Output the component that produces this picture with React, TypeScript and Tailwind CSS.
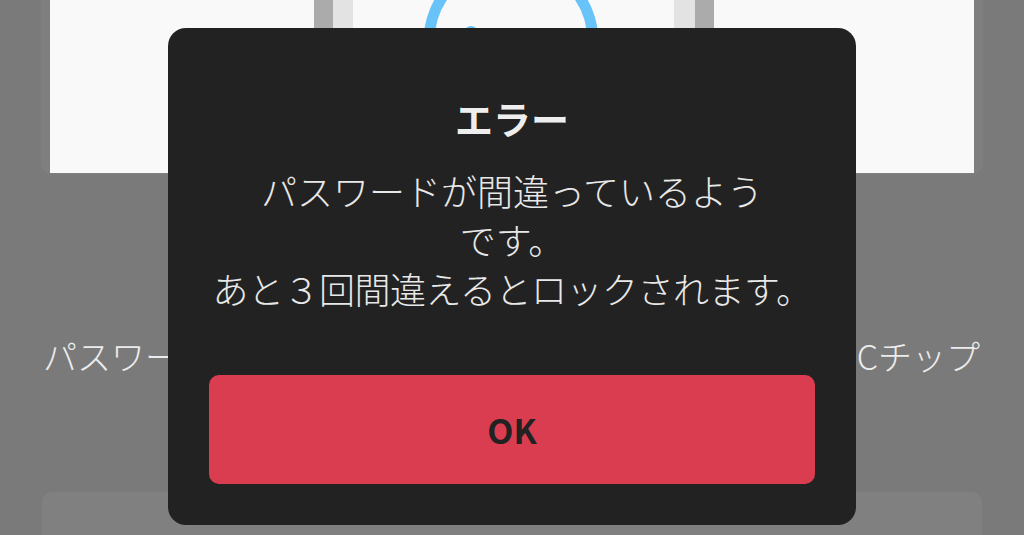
const jp = "font-['Noto_Sans_CJK_JP','Noto_Sans',sans-serif]";

function PhoneIllustration() {
  return (
    <svg width="924" height="173" viewBox="0 0 924 173" className="block">
      <rect x="264" y="0" width="19" height="173" fill="#ababab" />
      <rect x="283" y="0" width="20" height="173" fill="#e3e3e3" />
      <rect x="624" y="0" width="21" height="173" fill="#e3e3e3" />
      <rect x="645" y="0" width="19" height="173" fill="#ababab" />
      <circle cx="461" cy="42" r="82" fill="none" stroke="#68c3f9" strokeWidth="11" />
      <circle cx="421" cy="33" r="7" fill="#68c3f9" />
    </svg>
  );
}

function ErrorDialog() {
  return (
    <div className="absolute left-[168px] top-[28px] flex h-[497px] w-[688px] flex-col items-center rounded-[18px] bg-[#222222] px-[41px] pt-[65px] pb-[41px]">
      <h2 className={`${jp} text-[38px] font-bold leading-[50px] text-[#eeeeee]`}>エラー</h2>
      <div className={`${jp} mt-[23px] whitespace-nowrap text-center text-[36px] font-light leading-[49px] text-[#e8e8e8]`}>
        <p>パスワードが間違っているよう</p>
        <p>です。</p>
        <p className="tracking-[-0.5px]">あと３回間違えるとロックされます。</p>
      </div>
      <button
        type="button"
        className={`${jp} mt-auto flex h-[109px] w-full items-center justify-center rounded-[10px] bg-[#db3d50] text-[34px] font-bold text-[#222222]`}
      >
        OK
      </button>
    </div>
  );
}

export default function App() {
  return (
    <div className="relative h-[535px] w-[1024px] overflow-hidden bg-[#7a7a7a]">
      <div className="mx-[41px] h-[174px] rounded-b-[10px] bg-[#7f7f7f] px-[9px]">
        <div className="h-[173px] bg-[#f9f9f9]">
          <PhoneIllustration />
        </div>
      </div>

      <div className={`${jp} mt-[162px] flex justify-between pl-[43px] pr-[44px] text-[34px] font-light leading-[40px] text-[#ececec]`}>
        <span>パスワード</span>
        <span>ICチップ</span>
      </div>

      <div className="mx-[42px] mt-[116px] h-[60px] rounded-t-[10px] bg-[#808080]" />

      <ErrorDialog />
    </div>
  );
}
